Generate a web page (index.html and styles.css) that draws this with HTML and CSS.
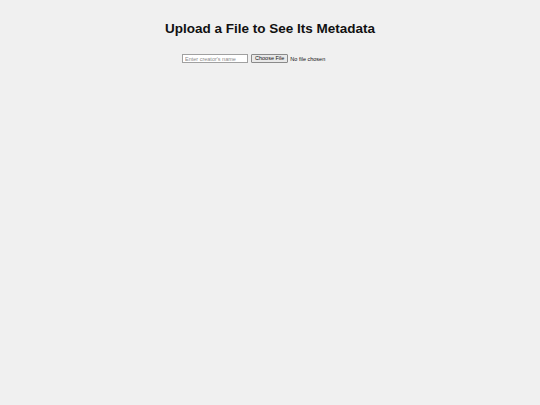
FILE: index.html
```html
<!DOCTYPE html>
<html>
<head>
<meta charset="utf-8">
<link rel="stylesheet" href="styles.css">
</head>
<body>
<div class="page">
  <h1 class="title">Upload a File to See Its Metadata</h1>
  <form class="upload-row">
    <input class="name-input" type="text" placeholder="Enter creator's name">
    <div class="file-field">
      <span class="file-btn">Choose File</span>
      <span class="file-status">No file chosen</span>
    </div>
  </form>
</div>
</body>
</html>
```

FILE: styles.css
```css
html, body {
  margin: 0;
  padding: 0;
  background: #f0f0f0;
  font-family: "Liberation Sans", Arial, sans-serif;
  color: #000;
}
.page {
  width: 540px;
  height: 405px;
  padding-top: 21px;
  box-sizing: border-box;
}
.title {
  margin: 0;
  text-align: center;
  font-size: 13.5px;
  line-height: 16px;
  font-weight: bold;
  color: #111;
}
.upload-row {
  display: flex;
  justify-content: center;
  align-items: center;
  gap: 3px;
  margin-top: 17px;
}
.name-input {
  width: 66px;
  height: 9px;
  box-sizing: border-box;
  margin: 0;
  padding: 0 2px;
  border: 1px solid #a0a0a0;
  background: #fff;
  font-family: "Liberation Sans", Arial, sans-serif;
  font-size: 5.5px;
  outline: none;
}
.name-input::placeholder {
  color: #8a8a8a;
}
.file-field {
  width: 107px;
  display: flex;
  align-items: center;
  gap: 2px;
  font-size: 5.5px;
}
.file-btn {
  display: inline-block;
  height: 9px;
  box-sizing: border-box;
  padding: 0 3px;
  line-height: 7px;
  border: 1px solid #8a8a8a;
  border-radius: 1px;
  background: #e9e9e9;
  color: #111;
}
.file-status {
  color: #111;
}
```
